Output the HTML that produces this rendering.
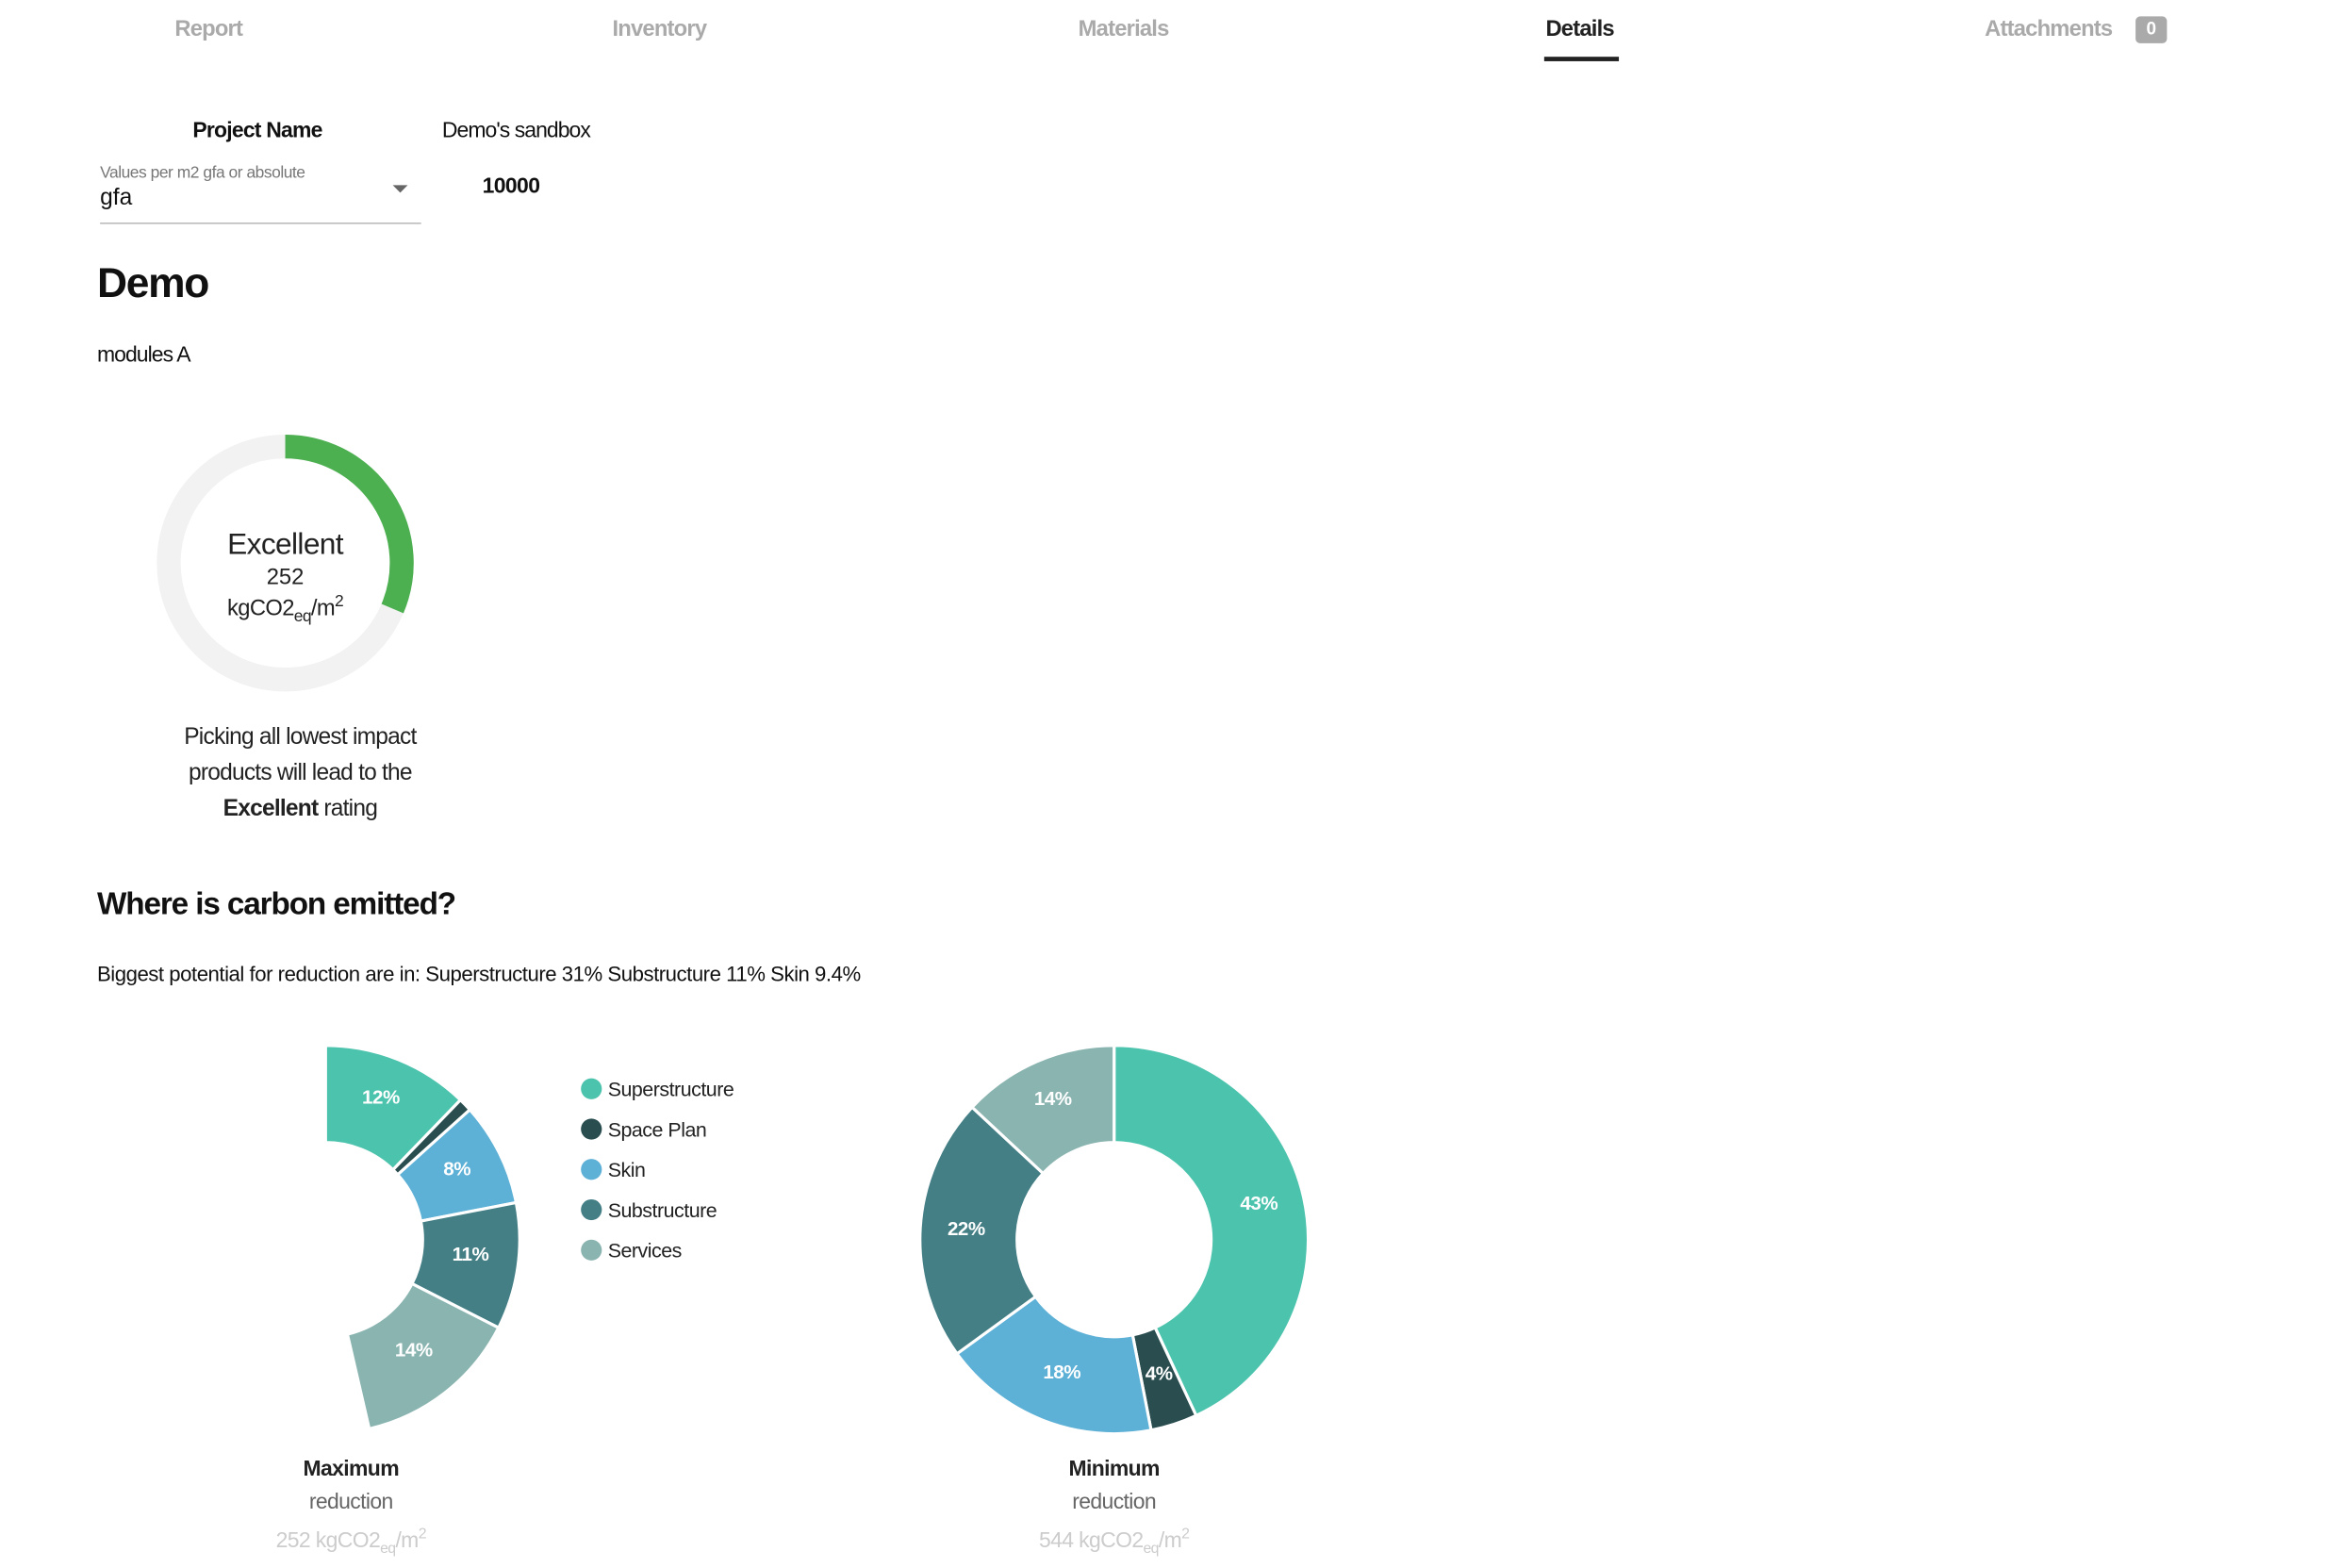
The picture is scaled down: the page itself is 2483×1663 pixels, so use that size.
<!DOCTYPE html>
<html><head><meta charset="utf-8"><style>
html,body{margin:0;padding:0;background:#fff;overflow:hidden}
body{width:2483px;height:1656px}
#w{position:absolute;left:0;top:0;width:1570px;height:1050px;transform:scale(1.584);transform-origin:0 0;font-family:"Liberation Sans",sans-serif;color:#111}
.a{position:absolute;white-space:nowrap;line-height:1}
.tab{font-size:15px;color:#aaa;font-weight:bold;top:12px;letter-spacing:-0.5px}
</style></head><body><div id="w">
<div class="a tab" style="left:117px">Report</div>
<div class="a tab" style="left:410px">Inventory</div>
<div class="a tab" style="left:722px">Materials</div>
<div class="a tab" style="left:1035px;color:#222">Details</div>
<div style="position:absolute;left:1034px;top:38px;width:50px;height:3px;background:#222"></div>
<div class="a tab" style="left:1329px">Attachments</div>
<div class="a" style="left:1430px;top:11px;width:21px;height:18px;background:#aaa;border-radius:3px;color:#fff;font-size:12px;font-weight:bold;text-align:center;line-height:16px">0</div>

<div class="a" style="left:129px;top:81px;font-size:14.5px;font-weight:bold;letter-spacing:-0.5px">Project Name</div>
<div class="a" style="left:296px;top:81px;font-size:14.5px;letter-spacing:-0.6px">Demo's sandbox</div>
<div class="a" style="left:67px;top:111px;font-size:11px;color:#777;letter-spacing:-0.3px">Values per m2 gfa or absolute</div>
<div class="a" style="left:67px;top:125px;font-size:15.5px">gfa</div>
<div class="a" style="left:263px;top:124px;width:0;height:0;border-left:5px solid transparent;border-right:5px solid transparent;border-top:5px solid #666"></div>
<div style="position:absolute;left:67px;top:149px;width:215px;height:1px;background:#bbb"></div>
<div class="a" style="left:323px;top:118px;font-size:14.5px;font-weight:bold;letter-spacing:-0.4px">10000</div>

<div class="a" style="left:65px;top:176px;font-size:28px;font-weight:bold;letter-spacing:-0.8px">Demo</div>
<div class="a" style="left:65px;top:231px;font-size:14.5px;letter-spacing:-0.6px">modules A</div>

<svg style="position:absolute;left:0;top:0" width="1550" height="1034">
<circle cx="191" cy="377" r="78" fill="none" stroke="#f2f2f2" stroke-width="16"/>
<path id="g" fill="none" stroke="#4caf50" stroke-width="16"/>
<g id="c1"></g><g id="c2"></g>
</svg>
<div class="a" style="left:91px;top:355px;width:200px;text-align:center;font-size:20px;color:#222;letter-spacing:-0.4px">Excellent</div>
<div class="a" style="left:91px;top:379px;width:200px;text-align:center;font-size:15px;color:#222">252</div>
<div class="a" style="left:91px;top:398px;width:200px;text-align:center;font-size:15px;color:#222;letter-spacing:-0.4px">kgCO2<sub style="font-size:11px">eq</sub>/m<sup style="font-size:11px">2</sup></div>
<div class="a" style="left:91px;top:482px;width:220px;text-align:center;font-size:15.5px;line-height:24px;color:#222;letter-spacing:-0.5px">Picking all lowest impact<br>products will lead to the<br><b>Excellent</b> rating</div>

<div class="a" style="left:65px;top:595px;font-size:21px;font-weight:bold;letter-spacing:-0.7px">Where is carbon emitted?</div>
<div class="a" style="left:65px;top:645px;font-size:14px;letter-spacing:-0.3px">Biggest potential for reduction are in: Superstructure 31% Substructure 11% Skin 9.4%</div>

<div style="position:absolute;left:389px;top:716px;font-size:13.5px;color:#222;line-height:27px;letter-spacing:-0.3px">
<div><span style="display:inline-block;width:14px;height:14px;border-radius:50%;background:#4cc3ad;vertical-align:-2px;margin-right:4px"></span>Superstructure</div>
<div><span style="display:inline-block;width:14px;height:14px;border-radius:50%;background:#2a4d4f;vertical-align:-2px;margin-right:4px"></span>Space Plan</div>
<div><span style="display:inline-block;width:14px;height:14px;border-radius:50%;background:#5db0d6;vertical-align:-2px;margin-right:4px"></span>Skin</div>
<div><span style="display:inline-block;width:14px;height:14px;border-radius:50%;background:#447f86;vertical-align:-2px;margin-right:4px"></span>Substructure</div>
<div><span style="display:inline-block;width:14px;height:14px;border-radius:50%;background:#8ab4b0;vertical-align:-2px;margin-right:4px"></span>Services</div>
</div>

<div class="a" style="left:135px;top:977px;width:200px;text-align:center;font-size:14.5px;font-weight:bold;color:#222;letter-spacing:-0.4px">Maximum</div>
<div class="a" style="left:135px;top:999px;width:200px;text-align:center;font-size:14.5px;color:#666;letter-spacing:-0.4px">reduction</div>
<div class="a" style="left:135px;top:1023px;width:200px;text-align:center;font-size:14.5px;color:#ccc;letter-spacing:-0.4px">252 kgCO2<sub style="font-size:10px">eq</sub>/m<sup style="font-size:10px">2</sup></div>
<div class="a" style="left:646px;top:977px;width:200px;text-align:center;font-size:14.5px;font-weight:bold;color:#222;letter-spacing:-0.4px">Minimum</div>
<div class="a" style="left:646px;top:999px;width:200px;text-align:center;font-size:14.5px;color:#666;letter-spacing:-0.4px">reduction</div>
<div class="a" style="left:646px;top:1023px;width:200px;text-align:center;font-size:14.5px;color:#ccc;letter-spacing:-0.4px">544 kgCO2<sub style="font-size:10px">eq</sub>/m<sup style="font-size:10px">2</sup></div>
</div>
<script>
function P(cx,cy,r,a){a=a*Math.PI/180;return [cx+r*Math.sin(a),cy-r*Math.cos(a)];}
function seg(cx,cy,ro,ri,a0,a1){var l=(a1-a0)>180?1:0;var p1=P(cx,cy,ro,a0),p2=P(cx,cy,ro,a1),p3=P(cx,cy,ri,a1),p4=P(cx,cy,ri,a0);
return "M"+p1+"A"+ro+","+ro+" 0 "+l+" 1 "+p2+"L"+p3+"A"+ri+","+ri+" 0 "+l+" 0 "+p4+"Z";}
var g=P(191,377,78,0),g2=P(191,377,78,113);
document.getElementById('g').setAttribute('d',"M"+g+"A78,78 0 0 1 "+g2);
function chart(id,cx,cy,segs,labels){var h="";segs.forEach(function(s){h+='<path d="'+seg(cx,cy,130,65,s[0],s[1])+'" fill="'+s[2]+'" stroke="#fff" stroke-width="2"/>';});
labels.forEach(function(l){h+='<text x="'+l[0]+'" y="'+l[1]+'" fill="#fff" font-size="13" font-weight="bold" text-anchor="middle" letter-spacing="-0.3" font-family="Liberation Sans,sans-serif">'+l[2]+'</text>';});
document.getElementById(id).innerHTML=h;}
chart('c1',218,830,[[0,44,'#4cc3ad'],[44,48,'#2a4d4f'],[48,79,'#5db0d6'],[79,117,'#447f86'],[117,167,'#8ab4b0']],
[[255,739,'12%'],[306,787,'8%'],[315,844,'11%'],[277,908,'14%']]);
chart('c2',746,830,[[0,155,'#4cc3ad'],[155,169,'#2a4d4f'],[169,234,'#5db0d6'],[234,313,'#447f86'],[313,360,'#8ab4b0']],
[[843,810,'43%'],[776,924,'4%'],[711,923,'18%'],[647,827,'22%'],[705,740,'14%']]);
</script>
</body></html>
